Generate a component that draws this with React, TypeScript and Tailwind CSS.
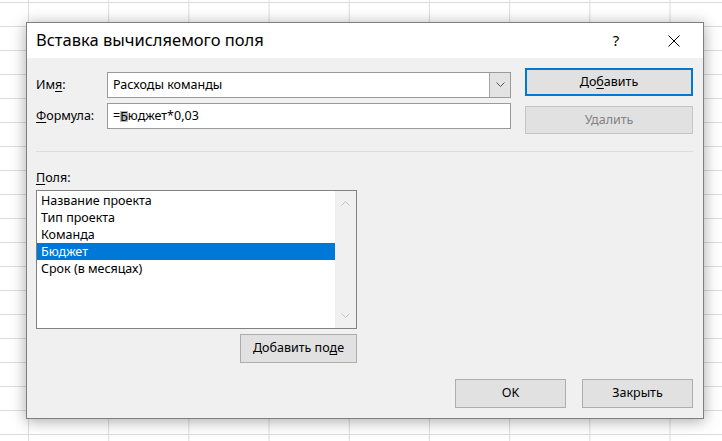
import React from "react";

const fields = ["Название проекта", "Тип проекта", "Команда", "Бюджет", "Срок (в месяцах)"];

const Chevron = ({ up, color }: { up?: boolean; color: string }) => (
  <svg width="9" height="6" viewBox="0 0 9 6" fill="none">
    <path d={up ? "M0.5 5.5 L4.5 1.5 L8.5 5.5" : "M0.5 0.5 L4.5 4.5 L8.5 0.5"} stroke={color} strokeWidth="1" />
  </svg>
);

const Button = ({
  children,
  variant = "normal",
  className = "",
}: {
  children: React.ReactNode;
  variant?: "normal" | "default" | "disabled";
  className?: string;
}) => {
  const look =
    variant === "default"
      ? "border-2 border-[#0078d7] text-black"
      : variant === "disabled"
        ? "border border-[#c4c4c4] text-[#838383]"
        : "border border-[#adadad] text-black";
  return (
    <button className={`flex items-center justify-center bg-[#e1e1e1] text-[12.5px] ${look} ${className}`}>
      {children}
    </button>
  );
};

export default function App() {
  return (
    <div className="relative h-[441px] w-[722px] overflow-hidden bg-white bg-[linear-gradient(to_right,#dcdcdc_1px,transparent_1px),linear-gradient(to_bottom,#dcdcdc_1px,transparent_1px)] bg-[size:80.2px_24px] bg-[position:28px_2px] font-['Noto_Sans',sans-serif]">
      <div className="absolute left-[26px] top-[22px] flex h-[397px] w-[678px] flex-col border border-[#7f7f7f] bg-[#f0f0f0] shadow-[0_2px_14px_rgba(0,0,0,0.35)]">
        {/* title bar */}
        <div className="flex h-[37px] items-center bg-white pl-[9px]">
          <span className="flex-1 text-[16.5px] text-black">Вставка вычисляемого поля</span>
          <div className="flex h-full w-[58px] items-center justify-center text-[15px] text-black">?</div>
          <div className="flex h-full w-[58px] items-center justify-center">
            <svg width="12" height="12" viewBox="0 0 12 12">
              <path d="M0.5 0.5 L11.5 11.5 M11.5 0.5 L0.5 11.5" stroke="#000" strokeWidth="1" />
            </svg>
          </div>
        </div>

        {/* body */}
        <div className="flex flex-1 flex-col pl-[9px] pr-[10px] pt-[10px] pb-[10px] text-[12.5px] text-black">
          <div className="flex gap-[14px]">
            <div className="mt-[4px] flex flex-col gap-[5px]">
              <div className="flex items-center">
                <span className="w-[71px] pt-[1px]">
                  Им<span className="underline underline-offset-2">я</span>:
                </span>
                <div className="flex h-[26px] w-[404px] items-center border border-[#9a9a9a] bg-white">
                  <span className="flex-1 pl-[5px] pt-[1px]">Расходы команды</span>
                  <div className="flex h-full w-[21px] items-center justify-center border-l border-[#a8a8a8] bg-[#e3e3e3]">
                    <Chevron color="#555" />
                  </div>
                </div>
              </div>
              <div className="flex items-center">
                <span className="w-[71px]">
                  <span className="underline underline-offset-2">Ф</span>ормула:
                </span>
                <div className="flex h-[26px] w-[404px] items-center border border-[#9a9a9a] bg-white pl-[5px]">
                  =<span className="inline-block h-[11px] bg-[#b8b8b8] leading-[11px]">Б</span>юджет*0,03
                </div>
              </div>
            </div>
            <div className="flex flex-col gap-[10px]">
              <Button variant="default" className="h-[28px] w-[168px]">
                До<span className="underline underline-offset-2">б</span>авить
              </Button>
              <Button variant="disabled" className="h-[28px] w-[168px]">
                Удалить
              </Button>
            </div>
          </div>

          <div className="mt-[17px] h-px bg-[#dcdcdc]" />

          <div className="mt-[18px] leading-[16px]">
            <span className="underline underline-offset-2">П</span>оля:
          </div>
          <div className="mt-[4px] flex w-[321px] flex-col items-end">
            <div className="flex h-[139px] w-full border border-[#828282] bg-white">
              <div className="flex-1 pt-[1px]">
                {fields.map((f) => (
                  <div
                    key={f}
                    className={`h-[17px] pl-[4px] leading-[17px] ${f === "Бюджет" ? "bg-[#0078d7] text-white" : ""}`}
                  >
                    {f}
                  </div>
                ))}
              </div>
              <div className="flex w-[21px] flex-col items-center justify-between bg-[#f0f0f0] py-[9px]">
                <Chevron up color="#c2c2c2" />
                <Chevron color="#c2c2c2" />
              </div>
            </div>
            <Button className="mt-[5px] h-[29px] w-[117px]">
              Добавить по<span className="underline underline-offset-2">д</span>е
            </Button>
          </div>

          <div className="mt-[16px] flex justify-end gap-[16px]">
            <Button className="h-[29px] w-[111px]">OK</Button>
            <Button className="h-[29px] w-[111px]">Закрыть</Button>
          </div>
        </div>
      </div>
    </div>
  );
}
